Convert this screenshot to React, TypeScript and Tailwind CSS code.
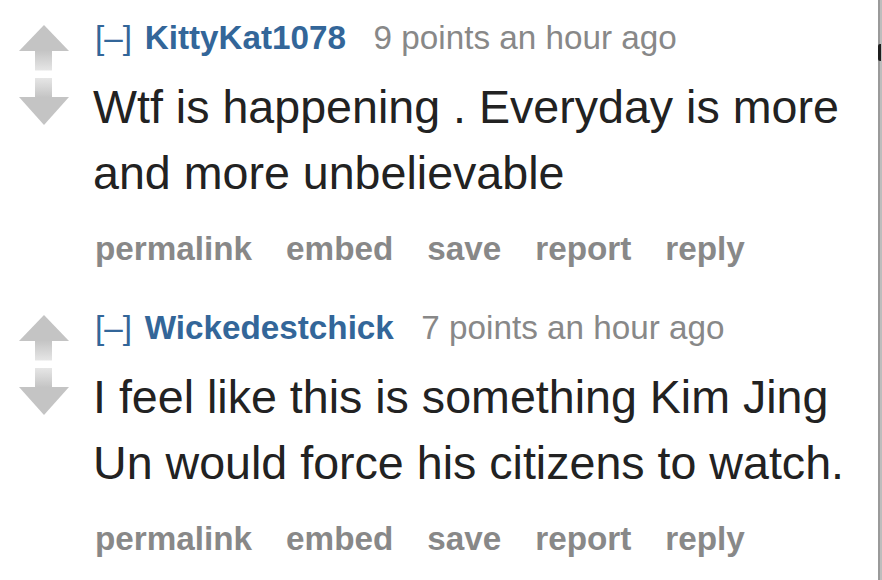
import React from "react";

function Arrows() {
  return (
    <svg width="52" height="101" viewBox="0 0 52 101" className="block" style={{ filter: "blur(0.6px)" }}>
      <defs>
        <linearGradient id="upStem" x1="0" y1="0" x2="0" y2="1">
          <stop offset="0" stopColor="#c4c4c4" />
          <stop offset="1" stopColor="#e6e6e6" />
        </linearGradient>
        <linearGradient id="downStem" x1="0" y1="0" x2="0" y2="1">
          <stop offset="0" stopColor="#e6e6e6" />
          <stop offset="1" stopColor="#c4c4c4" />
        </linearGradient>
      </defs>
      {/* up arrow */}
      <polygon points="26,0 51,26 1,26" fill="#c4c4c4" />
      <rect x="17" y="25.5" width="17" height="20" fill="url(#upStem)" />
      {/* down arrow */}
      <rect x="17" y="53" width="17" height="19.5" fill="url(#downStem)" />
      <polygon points="1,72 51,72 26,100" fill="#c4c4c4" />
    </svg>
  );
}

type C = { user: string; points: string; body: string };

const comments: C[] = [
  { user: "KittyKat1078", points: "9 points", body: "Wtf is happening . Everyday is more and more unbelievable" },
  { user: "Wickedestchick", points: "7 points", body: "I feel like this is something Kim Jing Un would force his citizens to watch." },
];

function Comment({ c }: { c: C }) {
  return (
    <div className="flex h-[292px]">
      <div className="w-[93px] shrink-0 pl-[18px] pt-[25px]">
        <Arrows />
      </div>
      <div className="flex-1 min-w-0 pt-[20px]">
        <div className="flex items-baseline pl-[2px] text-[33.25px] leading-[36px] whitespace-nowrap">
          <span className="text-[#336699]">[–]</span>
          <span className="ml-[12.7px] font-bold text-[#336699]">{c.user}</span>
          <span className="ml-[27.5px] text-[#888888]">
            {c.points} an hour ago
          </span>
        </div>
        <div className="mt-[18px] text-[46.6px] leading-[66px] text-[#222222]">{c.body}</div>
        <div className="mt-[25px] flex pl-[2px] gap-[34px] text-[33.25px] leading-[36px] font-bold text-[#888888] whitespace-nowrap">
          <span>permalink</span>
          <span>embed</span>
          <span>save</span>
          <span>report</span>
          <span>reply</span>
        </div>
      </div>
    </div>
  );
}

export default function App() {
  return (
    <div
      className="relative w-[882px] h-[580px] overflow-hidden bg-white flex"
      style={{ fontFamily: '"Liberation Sans", Arial, sans-serif' }}
    >
      <div className="flex-1 min-w-0 flex flex-col">
        {comments.map((c) => (
          <Comment key={c.user} c={c} />
        ))}
      </div>
      <div className="w-[4px] shrink-0 flex">
        <div className="w-[2px] bg-[#9a9a9a]" />
        <div className="w-[2px] bg-[#bdbdbd]" />
      </div>
      <div className="absolute left-[878px] top-[44px] w-[3px] h-[17px] rounded-l-[2px] bg-[#1e1e1e]" />
    </div>
  );
}
